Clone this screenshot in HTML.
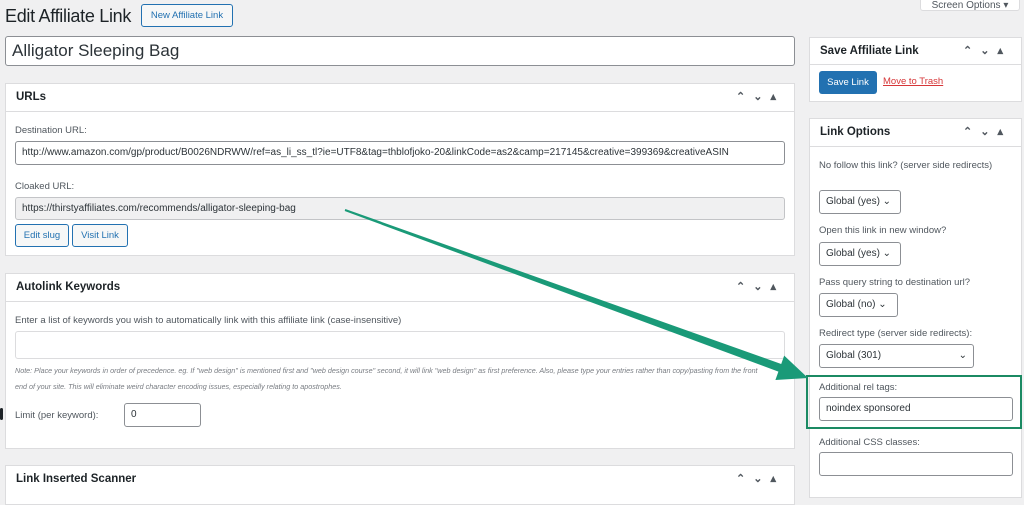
<!DOCTYPE html>
<html><head><style>
*{box-sizing:border-box}
body{margin:0;width:1024px;height:492px;overflow:hidden;background:#f0f0f1;font-family:"Liberation Sans",sans-serif;color:#3c434a;position:relative}
.a{position:absolute}
.panel{position:absolute;background:#fff;border:1px solid #dcdcde}
.hd{position:absolute;left:0;right:0;top:0;border-bottom:1px solid #dcdcde;font-size:11.5px;font-weight:bold;color:#1d2327;padding-left:10px}
.ctl{position:absolute;right:10px;font-size:11px;color:#50575e;letter-spacing:8px}
.lbl{position:absolute;font-size:9.5px;color:#50575e;white-space:nowrap}
.inp{position:absolute;background:#fff;border:1px solid #8c8f94;border-radius:3px;font-size:10px;color:#2c3338;padding-left:6px;white-space:nowrap;overflow:hidden}
.btn{position:absolute;border:1px solid #2271b1;color:#2271b1;background:#f6f7f7;border-radius:3px;font-size:9.5px;text-align:center}
</style></head><body>
<div class="a" style="left:5px;top:6px;font-size:18px;letter-spacing:-0.3px;color:#1d2327">Edit Affiliate Link</div>
<div class="btn" style="left:141px;top:4px;width:92px;height:23px;line-height:21px">New Affiliate Link</div>
<div class="a" style="left:920px;top:-10px;width:100px;height:21px;background:#fff;border:1px solid #dcdcde;border-radius:3px;font-size:10px;text-align:center;line-height:30px;color:#50575e">Screen Options ▾</div>
<div class="inp" style="left:5px;top:36px;width:790px;height:30px;font-size:17px;line-height:28px;padding-left:6px">Alligator Sleeping Bag</div>

<div class="panel" style="left:5px;top:83px;width:790px;height:173px">
<div class="hd" style="height:28px;line-height:27px">URLs<span class="ctl" style="top:0">⌃⌄▴</span></div>
<div class="lbl" style="left:9px;top:41px">Destination URL:</div>
<div class="inp" style="left:9px;top:57px;width:770px;height:24px;line-height:22px">http://www.amazon.com/gp/product/B0026NDRWW/ref=as_li_ss_tl?ie=UTF8&amp;tag=thblofjoko-20&amp;linkCode=as2&amp;camp=217145&amp;creative=399369&amp;creativeASIN</div>
<div class="lbl" style="left:9px;top:97px">Cloaked URL:</div>
<div class="inp" style="left:9px;top:113px;width:770px;height:23px;line-height:21px;background:#f0f0f1;border-color:#c3c4c7">https://thirstyaffiliates.com/recommends/alligator-sleeping-bag</div>
<div class="btn" style="left:9px;top:140px;width:54px;height:23px;line-height:21px">Edit slug</div>
<div class="btn" style="left:66px;top:140px;width:56px;height:23px;line-height:21px">Visit Link</div>
</div>

<div class="panel" style="left:5px;top:273px;width:790px;height:176px">
<div class="hd" style="height:28px;line-height:27px">Autolink Keywords<span class="ctl">⌃⌄▴</span></div>
<div class="lbl" style="left:9px;top:41px">Enter a list of keywords you wish to automatically link with this affiliate link (case-insensitive)</div>
<div class="inp" style="left:9px;top:57px;width:770px;height:28px;border-color:#dcdcde"></div>
<div class="lbl" style="left:9px;top:92px;font-size:7.2px;font-style:italic;color:#787c82">Note: Place your keywords in order of precedence. eg. If "web design" is mentioned first and "web design course" second, it will link "web design" as first preference. Also, please type your entries rather than copy/pasting from the front</div>
<div class="lbl" style="left:9px;top:108px;font-size:7.2px;font-style:italic;color:#787c82">end of your site. This will eliminate weird character encoding issues, especially relating to apostrophes.</div>
<div class="lbl" style="left:9px;top:136px">Limit (per keyword):</div>
<div class="inp" style="left:118px;top:129px;width:77px;height:24px;line-height:22px">0</div>
</div>
<div class="a" style="left:0;top:408px;width:3px;height:12px;background:#1d2327;border-radius:2px"></div>

<div class="panel" style="left:5px;top:465px;width:790px;height:40px">
<div class="hd" style="height:28px;line-height:27px;border:0">Link Inserted Scanner<span class="ctl">⌃⌄▴</span></div>
</div>

<div class="panel" style="left:809px;top:37px;width:213px;height:65px">
<div class="hd" style="height:27px;line-height:26px">Save Affiliate Link<span class="ctl">⌃⌄▴</span></div>
<div class="a" style="left:9px;top:33px;width:58px;height:23px;background:#2271b1;border-radius:3px;color:#fff;font-size:9.5px;text-align:center;line-height:23px">Save Link</div>
<div class="a" style="left:73px;top:38px;font-size:9.5px;color:#d63638;text-decoration:underline">Move to Trash</div>
</div>

<div class="panel" style="left:809px;top:118px;width:213px;height:380px">
<div class="hd" style="height:28px;line-height:27px">Link Options<span class="ctl">⌃⌄▴</span></div>
<div class="lbl" style="left:9px;top:41px">No follow this link? (server side redirects)</div>
<div class="inp" style="left:9px;top:71px;width:82px;height:24px;line-height:22px">Global (yes) ⌄</div>
<div class="lbl" style="left:9px;top:106px">Open this link in new window?</div>
<div class="inp" style="left:9px;top:123px;width:82px;height:24px;line-height:22px">Global (yes) ⌄</div>
<div class="lbl" style="left:9px;top:158px">Pass query string to destination url?</div>
<div class="inp" style="left:9px;top:174px;width:79px;height:24px;line-height:22px">Global (no) ⌄</div>
<div class="lbl" style="left:9px;top:209px">Redirect type (server side redirects):</div>
<div class="inp" style="left:9px;top:225px;width:155px;height:24px;line-height:22px">Global (301)<span style="position:absolute;right:6px">⌄</span></div>
<div class="lbl" style="left:9px;top:263px">Additional rel tags:</div>
<div class="inp" style="left:9px;top:278px;width:194px;height:24px;line-height:22px">noindex sponsored</div>
<div class="lbl" style="left:9px;top:318px">Additional CSS classes:</div>
<div class="inp" style="left:9px;top:333px;width:194px;height:24px"></div>
</div>
<div class="a" style="left:806px;top:375px;width:216px;height:54px;border:2px solid #1b8a63"></div>

<svg class="a" style="left:0;top:0" width="1024" height="492">
<polygon points="345.3,209 781.2,364 784.2,355.6 808,378 775.4,380 778.4,371.6 344.7,211" fill="#1a9a78"/>
</svg>
</body></html>
